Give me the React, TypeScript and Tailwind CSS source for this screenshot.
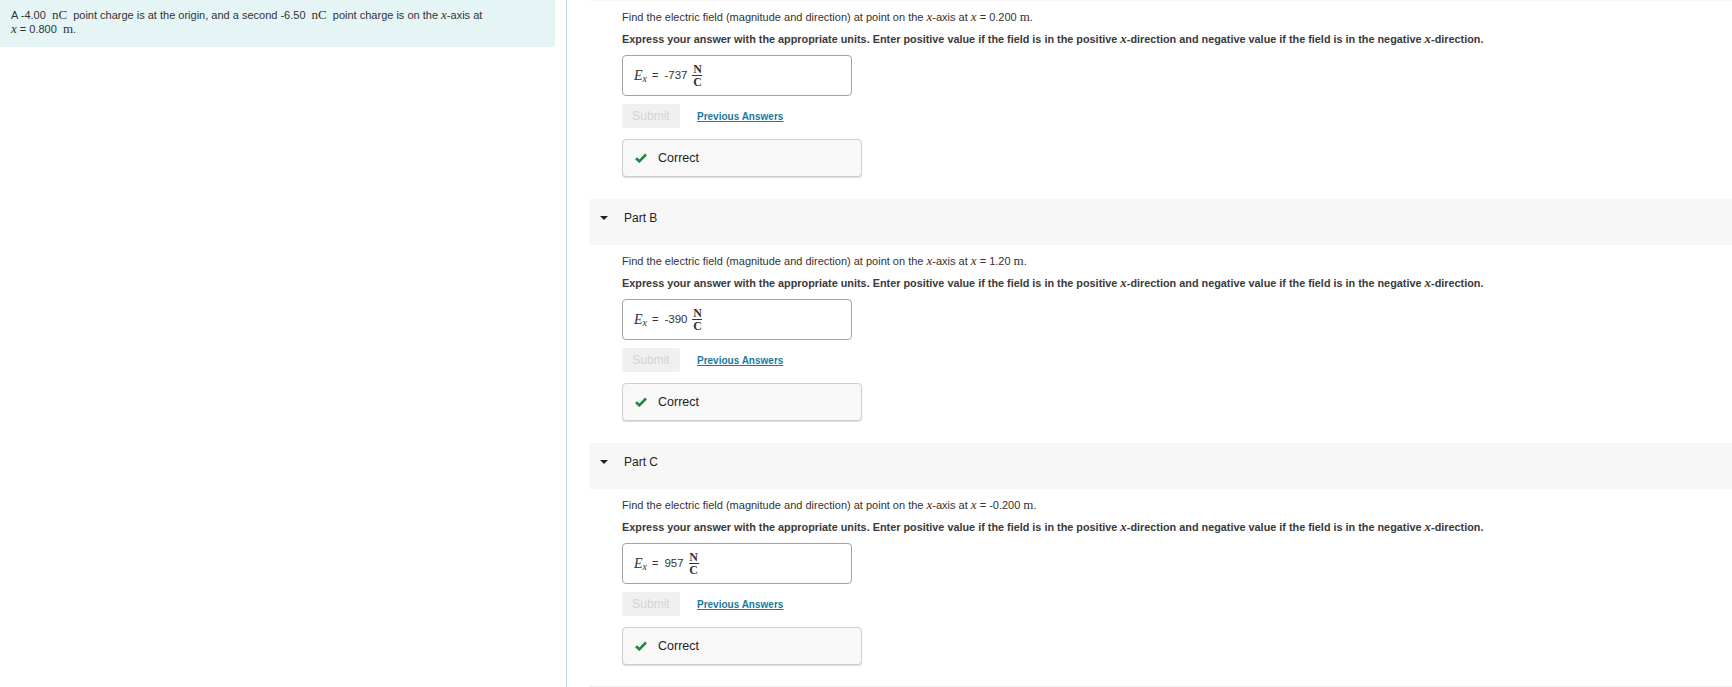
import React from 'react';

const serif = "font-['Liberation_Serif','Times_New_Roman',serif]";

function Rm({ children, end }: { children: React.ReactNode; end?: boolean }) {
  return <span className={`${serif} text-[13px] ${end ? 'ml-[3px]' : 'mx-[3px]'}`}>{children}</span>;
}

function It({ children }: { children: React.ReactNode }) {
  return <span className={`${serif} italic text-[13px]`}>{children}</span>;
}

function Answer({ value }: { value: string }) {
  return (
    <div className="flex h-[41px] w-[230px] items-center rounded-[4px] border border-[#a3a3a3] bg-white pl-[11px]">
      <span className={`${serif} italic text-[14px]`}>E</span>
      <span className={`${serif} italic text-[10px] relative top-[3px]`}>x</span>
      <span className="ml-[5px] text-[11px]">=</span>
      <span className="ml-[6px] text-[11.5px]">{value}</span>
      <span className={`${serif} ml-[5px] flex flex-col items-center text-[12px] font-bold leading-[12px]`}>
        <span>N</span>
        <span className="h-px w-[10px] bg-[#333]" />
        <span>C</span>
      </span>
    </div>
  );
}

function PartBody({ at, value }: { at: string; value: string }) {
  return (
    <div className="pl-[55px] pt-[8px]">
      <p className="text-[11px] leading-[16px]">
        Find the electric field (magnitude and direction) at point on the <It>x</It>-axis at <It>x</It> = {at}
        <Rm end>m</Rm>.
      </p>
      <p className="mt-[6px] text-[10.85px] font-bold leading-[16px] text-[#3a3a3a]">
        Express your answer with the appropriate units. Enter positive value if the field is in the positive{' '}
        <It>x</It>-direction and negative value if the field is in the negative <It>x</It>-direction.
      </p>
      <div className="mt-[8px]">
        <Answer value={value} />
      </div>
      <div className="mt-[8px] flex items-center">
        <button className="h-[24px] w-[58px] rounded-[2px] bg-[#f0f0f0] text-[12px] text-[#d3d3d3]">Submit</button>
        <a className="ml-[17px] text-[10px] font-bold text-[#1a7aa1] underline">Previous Answers</a>
      </div>
      <div className="mt-[11px] flex h-[38px] w-[240px] items-center rounded-[4px] border border-[#cfcfcf] bg-[#f8f8f8] pl-[12px] shadow-[0_1px_1px_rgba(0,0,0,0.15)]">
        <svg width="12" height="10" viewBox="0 0 12 10">
          <path d="M1 5.2 L4.3 8.3 L11 1.5" fill="none" stroke="#1d8a3f" strokeWidth="2.6" />
        </svg>
        <span className="ml-[11px] text-[12.5px] text-[#222]">Correct</span>
      </div>
    </div>
  );
}

function PartHeader({ label }: { label: string }) {
  return (
    <div className="ml-[22px] mt-[22px] flex h-[46px] items-start bg-[#f7f7f7] pl-[11px] pt-[11px]">
      <svg width="8" height="16" viewBox="0 0 8 16">
        <path d="M0 6 L8 6 L4 10 Z" fill="#222" />
      </svg>
      <span className="ml-[16px] text-[12px] leading-[16px] text-[#222]">{label}</span>
    </div>
  );
}

export default function App() {
  return (
    <div className="flex min-h-[687px] bg-white font-['Liberation_Sans',Arial,sans-serif] text-[#333]">
      {/* problem statement */}
      <div className="w-[567px] shrink-0 border-r border-[#c5d4e2]">
        <div className="w-[555px] bg-[#e5f5f6] px-[11px] pb-[11px] pt-[8px] text-[11px] leading-[14px]">
          A -4.00 <Rm>nC</Rm> point charge is at the origin, and a second -6.50 <Rm>nC</Rm> point charge is on the{' '}
          <It>x</It>-axis at
          <br />
          <It>x</It> = 0.800 <Rm end>m</Rm>.
        </div>
      </div>

      {/* parts */}
      <div className="flex-1">
        <div className="ml-[22px] h-[1px] bg-[#f7f7f7]" />
        <PartBody at="0.200" value="-737" />
        <PartHeader label="Part B" />
        <PartBody at="1.20" value="-390" />
        <PartHeader label="Part C" />
        <PartBody at="-0.200" value="957" />
        <div className="ml-[22px] mt-[21px] border-t border-[#eeeeee]" />
      </div>
    </div>
  );
}
